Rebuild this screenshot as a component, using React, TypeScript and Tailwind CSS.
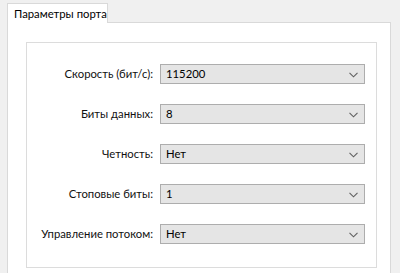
import React from "react";

const rows: [string, string][] = [
  ["Скорость (бит/с):", "115200"],
  ["Биты данных:", "8"],
  ["Четность:", "Нет"],
  ["Стоповые биты:", "1"],
  ["Управление потоком:", "Нет"],
];

function Combo({ value }: { value: string }) {
  return (
    <div className="flex h-[20px] w-[205px] items-center justify-between border border-[#adadad] bg-[#e5e5e5] pl-[5px] pr-[6px]">
      <span className="whitespace-nowrap text-[11.3px] leading-none text-black">{value}</span>
      <svg width="9" height="6" viewBox="0 0 9 6" className="mt-[1px]">
        <path d="M0.5 0.8 L4.5 4.8 L8.5 0.8" fill="none" stroke="#606060" strokeWidth="1.1" />
      </svg>
    </div>
  );
}

export default function App() {
  return (
    <div
      className="h-[273px] w-[400px] overflow-hidden bg-[#f0f0f0] pl-[7px] pr-[9px] pt-[3px]"
      style={{ fontFamily: 'Lato, "Noto Sans", sans-serif' }}
    >
      <div className="relative z-10 -mb-px flex h-[20px] w-[101px] items-center border border-b-0 border-[#d9d9d9] bg-white pl-[6px]">
        <span className="whitespace-nowrap text-[11.3px] leading-none text-black">Параметры порта</span>
      </div>
      <div className="h-[300px] border border-[#d9d9d9] bg-white pl-[18px] pr-[13px] pt-[19px]">
        <div className="flex h-[226px] flex-col gap-[20px] border border-[#dcdcdc] pt-[21px]">
          {rows.map(([label, value]) => (
            <div key={label} className="flex items-center">
              <div className="w-[126px] whitespace-nowrap text-right text-[11.3px] leading-none text-[#111]">{label}</div>
              <div className="ml-[7px]">
                <Combo value={value} />
              </div>
            </div>
          ))}
        </div>
      </div>
    </div>
  );
}
